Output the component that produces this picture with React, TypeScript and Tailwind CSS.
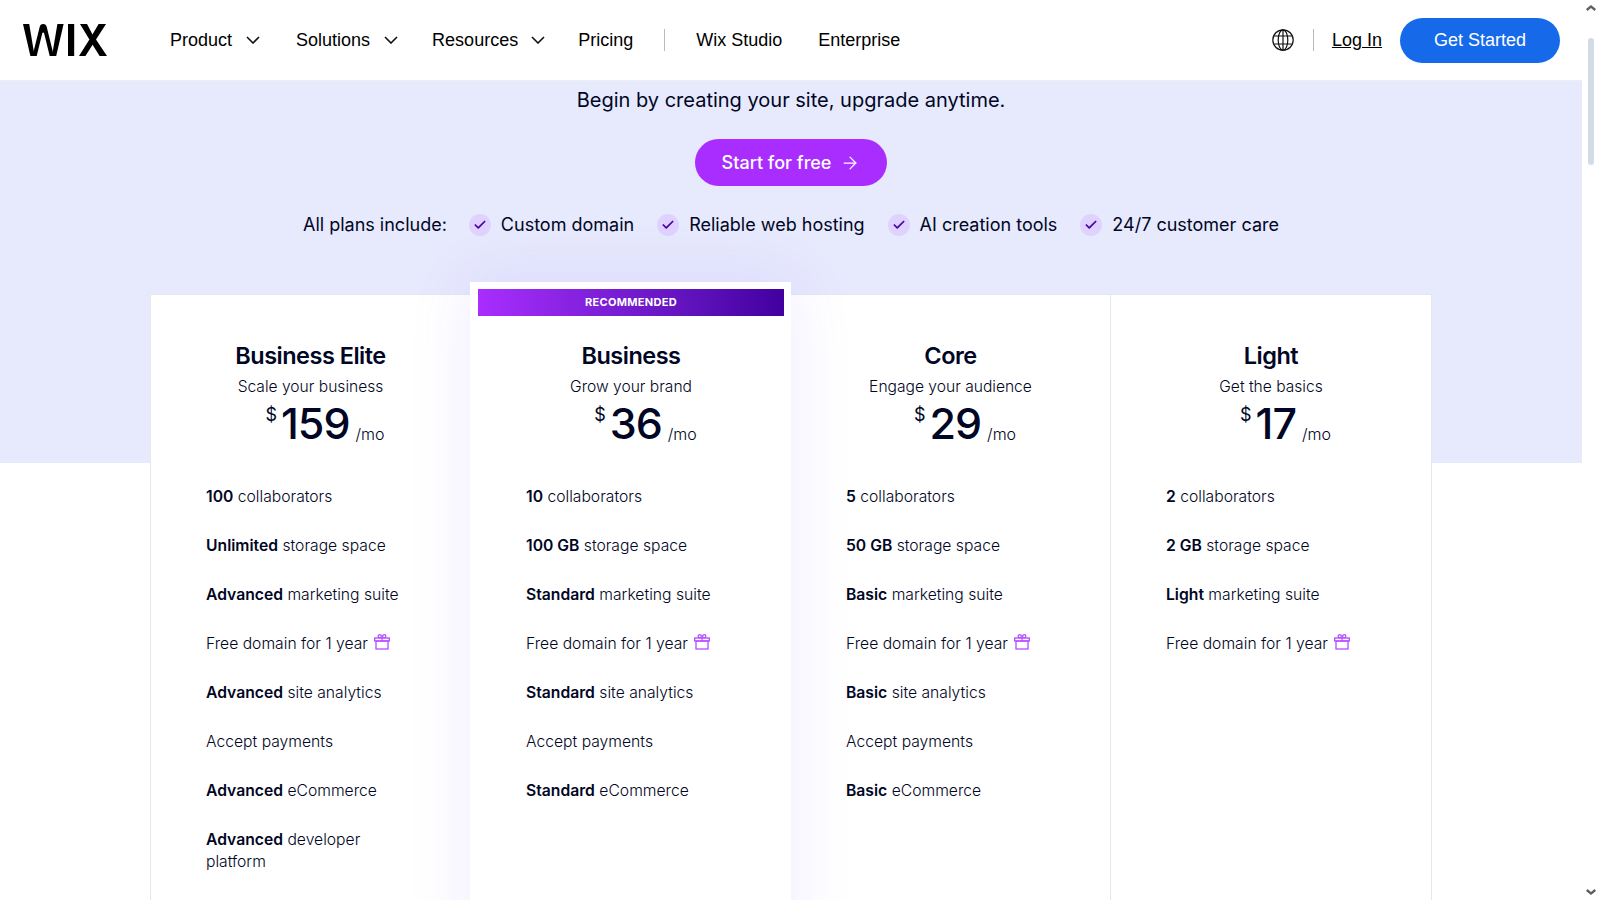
import { ArrowRight, Check } from "lucide-react";

interface Plan {
  name: string;
  tagline: string;
  price: string;
  recommended?: boolean;
  features: [string, string, string?][];
}

const plans: Plan[] = [
  {
    name: "Business Elite",
    tagline: "Scale your business",
    price: "159",
    features: [
      ["100", " collaborators"],
      ["Unlimited", " storage space"],
      ["Advanced", " marketing suite"],
      ["", "gift"],
      ["Advanced", " site analytics"],
      ["", "Accept payments"],
      ["Advanced", " eCommerce"],
      ["Advanced", " developer", "platform"],
    ],
  },
  {
    name: "Business",
    tagline: "Grow your brand",
    price: "36",
    recommended: true,
    features: [
      ["10", " collaborators"],
      ["100 GB", " storage space"],
      ["Standard", " marketing suite"],
      ["", "gift"],
      ["Standard", " site analytics"],
      ["", "Accept payments"],
      ["Standard", " eCommerce"],
    ],
  },
  {
    name: "Core",
    tagline: "Engage your audience",
    price: "29",
    features: [
      ["5", " collaborators"],
      ["50 GB", " storage space"],
      ["Basic", " marketing suite"],
      ["", "gift"],
      ["Basic", " site analytics"],
      ["", "Accept payments"],
      ["Basic", " eCommerce"],
    ],
  },
  {
    name: "Light",
    tagline: "Get the basics",
    price: "17",
    features: [
      ["2", " collaborators"],
      ["2 GB", " storage space"],
      ["Light", " marketing suite"],
      ["", "gift"],
    ],
  },
];

const included = ["Custom domain", "Reliable web hosting", "AI creation tools", "24/7 customer care"];

function WixLogo() {
  return (
    <svg width="84" height="32" viewBox="0 0 84 32" fill="#000">
      <path d="M0 0h6.200l5.400 32H7.400z" />
      <path d="M9.500 32 16.600 3.200c.5-2 1.600-3.200 3.600-3.200s3.100 1.200 3.600 3.200L30.900 32h-4.200L21.200 9.500c-.3-1.200-1.700-1.200-2 0L13.700 32z" />
      <path d="M29 32 34.400 0h6.200L33.200 32z" />
      <path d="M45 0h6.200v32H45z" />
      <path d="M57 0h7l5.500 10.400L75.600 0H83L73 15.600 84 32h-7.400l-7-11.200L62.400 32H56l10.400-16.400z" />
    </svg>
  );
}

function NavChevron() {
  return (
    <svg width="14" height="8" viewBox="0 0 14 8" fill="none" stroke="#111" strokeWidth="1.6">
      <path d="M1 1l6 6 6-6" />
    </svg>
  );
}

function NavItem({ label, menu, className }: { label: string; menu?: boolean; className?: string }) {
  return (
    <a className={`flex items-center text-[18px] leading-6 text-black ${className ?? ""}`}>
      {label}
      {menu && <NavChevron />}
    </a>
  );
}

function Globe() {
  return (
    <svg width="22" height="22" viewBox="0 0 22 22" fill="none" stroke="#111" strokeWidth="1.2">
      <circle cx="11" cy="11" r="10.200" />
      <ellipse cx="11" cy="11" rx="4.800" ry="10.200" />
      <path d="M11 .8v20.400M2 7h18M2 15h18" />
    </svg>
  );
}

function Gift() {
  return (
    <svg width="16" height="16" viewBox="0 0 16 16" fill="none" stroke="#b64cff" strokeWidth="1.300" className="ml-[6px] inline-block align-[-1px]">
      <rect x=".7" y="4" width="14.600" height="3" />
      <rect x="2" y="7" width="12" height="8" />
      <path d="M8 4v3" />
      <circle cx="5.800" cy="2.300" r="1.600" />
      <circle cx="10.200" cy="2.300" r="1.600" />
    </svg>
  );
}

function PlanCard({ plan }: { plan: Plan }) {
  return (
    <div
      className={
        plan.recommended
          ? "relative z-10 -mt-[12px] h-[700px] w-[321px] border-l border-white bg-white shadow-[0_0_60px_rgba(110,60,255,0.1)]"
          : "h-[700px] border border-[#e4e7f2] border-r-0 bg-white last:border-r"
      }
    >
      {plan.recommended && (
        <div className="mx-[7px] mt-[7px] flex h-[27px] items-center justify-center bg-gradient-to-r from-[#a92dff] to-[#4200a0] text-[11px] font-bold tracking-[0.3px] text-white">
          RECOMMENDED
        </div>
      )}
      <div className={plan.recommended ? "pt-[24px]" : "pt-[45px]"}>
        <h2 className="text-center text-[23.5px] font-semibold leading-8 tracking-[-0.5px]">{plan.name}</h2>
        <p className="mt-[3px] text-center text-[15.6px] font-light leading-6">{plan.tagline}</p>
        <div className="flex justify-center pl-[29px]">
          <span className="mr-[4px] mt-1 text-[18px] leading-6">$</span>
          <span className="text-[43px] font-medium leading-[48px] tracking-[-1px]">{plan.price}</span>
          <span className="mb-[2px] ml-[6px] self-end text-[16px] font-light leading-[22px]">/mo</span>
        </div>
        <ul className="mt-[39px] flex flex-col gap-[27px] px-[55px] text-[15.7px] font-light leading-[22px]">
          {plan.features.map(([strong, rest, nextLine], i) => (
            <li key={i}>
              {rest === "gift" ? (
                <>
                  Free domain for 1 year
                  <Gift />
                </>
              ) : (
                <>
                  <span className="block">
                    {strong && <b className="font-semibold">{strong}</b>}
                    {rest}
                  </span>
                  {nextLine && <span className="block">{nextLine}</span>}
                </>
              )}
            </li>
          ))}
        </ul>
      </div>
    </div>
  );
}

export default function App() {
  return (
    <div className="flex h-[900px] w-[1600px] overflow-hidden bg-white font-['Inter',sans-serif] text-[#000624]">
      <main className="w-[1582px]">
        <header className="flex h-[81px] items-center justify-between border-b border-[#eceef4] pl-[23px] pr-[22px] font-['Liberation_Sans',sans-serif]">
          <div className="flex items-center">
            <WixLogo />
            <nav className="ml-[63px] flex items-center">
              <NavItem label="Product" menu className="gap-[14px]" />
              <NavItem label="Solutions" menu className="ml-[36px] gap-[14px]" />
              <NavItem label="Resources" menu className="ml-[34px] gap-[13px]" />
              <NavItem label="Pricing" className="ml-[33px]" />
              <span className="ml-[31px] h-[22px] w-px bg-[#bbb]" />
              <NavItem label="Wix Studio" className="ml-[31px]" />
              <NavItem label="Enterprise" className="ml-[36px]" />
            </nav>
          </div>
          <div className="flex items-center">
            <Globe />
            <span className="ml-[19px] h-[22px] w-px bg-[#bbb]" />
            <a className="ml-[18px] text-[18px] text-black underline">Log In</a>
            <a className="ml-[18px] flex h-[45px] w-40 items-center justify-center rounded-full bg-[#166aea] text-[18px] text-white">
              Get Started
            </a>
          </div>
        </header>

        <section className="flex h-[382px] flex-col items-center bg-[#e7e9fd]">
          <p className="mt-[5px] text-[20px] leading-7">Begin by creating your site, upgrade anytime.</p>
          <a className="mt-[25px] flex h-[47px] w-[192px] items-center justify-center gap-[9px] rounded-full bg-[#a92dff] text-[18px] font-medium text-white">
            Start for free
            <ArrowRight size={20} strokeWidth={1.5} />
          </a>
          <div className="mt-[27px] flex items-center text-[18px] leading-6">
            <span className="mr-[22px]">All plans include:</span>
            {included.map((item) => (
              <span key={item} className="mr-[23px] flex items-center gap-[10px] last:mr-0">
                <span className="flex h-[22px] w-[22px] items-center justify-center rounded-full bg-[#e0d2ff]">
                  <Check size={14} strokeWidth={3} className="text-[#4a00a8]" />
                </span>
                {item}
              </span>
            ))}
          </div>
        </section>

        <div className="relative -mt-[169px] ml-[150px] grid w-[1282px] grid-cols-[320px_320px_320px_322px]">
          {plans.map((plan) => (
            <PlanCard key={plan.name} plan={plan} />
          ))}
        </div>
      </main>

      <aside className="flex w-[18px] flex-col items-center pt-[5px]">
        <svg width="10" height="6" viewBox="0 0 10 6" fill="#5f5f5f">
          <path d="M5 0l5 4-1.500 2L5 3 1.500 6 0 4z" />
        </svg>
        <div className="mt-[27px] h-[127px] w-[6px] rounded-full bg-[#d3dbe5]" />
        <svg width="10" height="6" viewBox="0 0 10 6" fill="#5f5f5f" className="mt-auto mb-[5px]">
          <path d="M5 6l5-4L8.500 0 5 3 1.500 0 0 2z" />
        </svg>
      </aside>
    </div>
  );
}
